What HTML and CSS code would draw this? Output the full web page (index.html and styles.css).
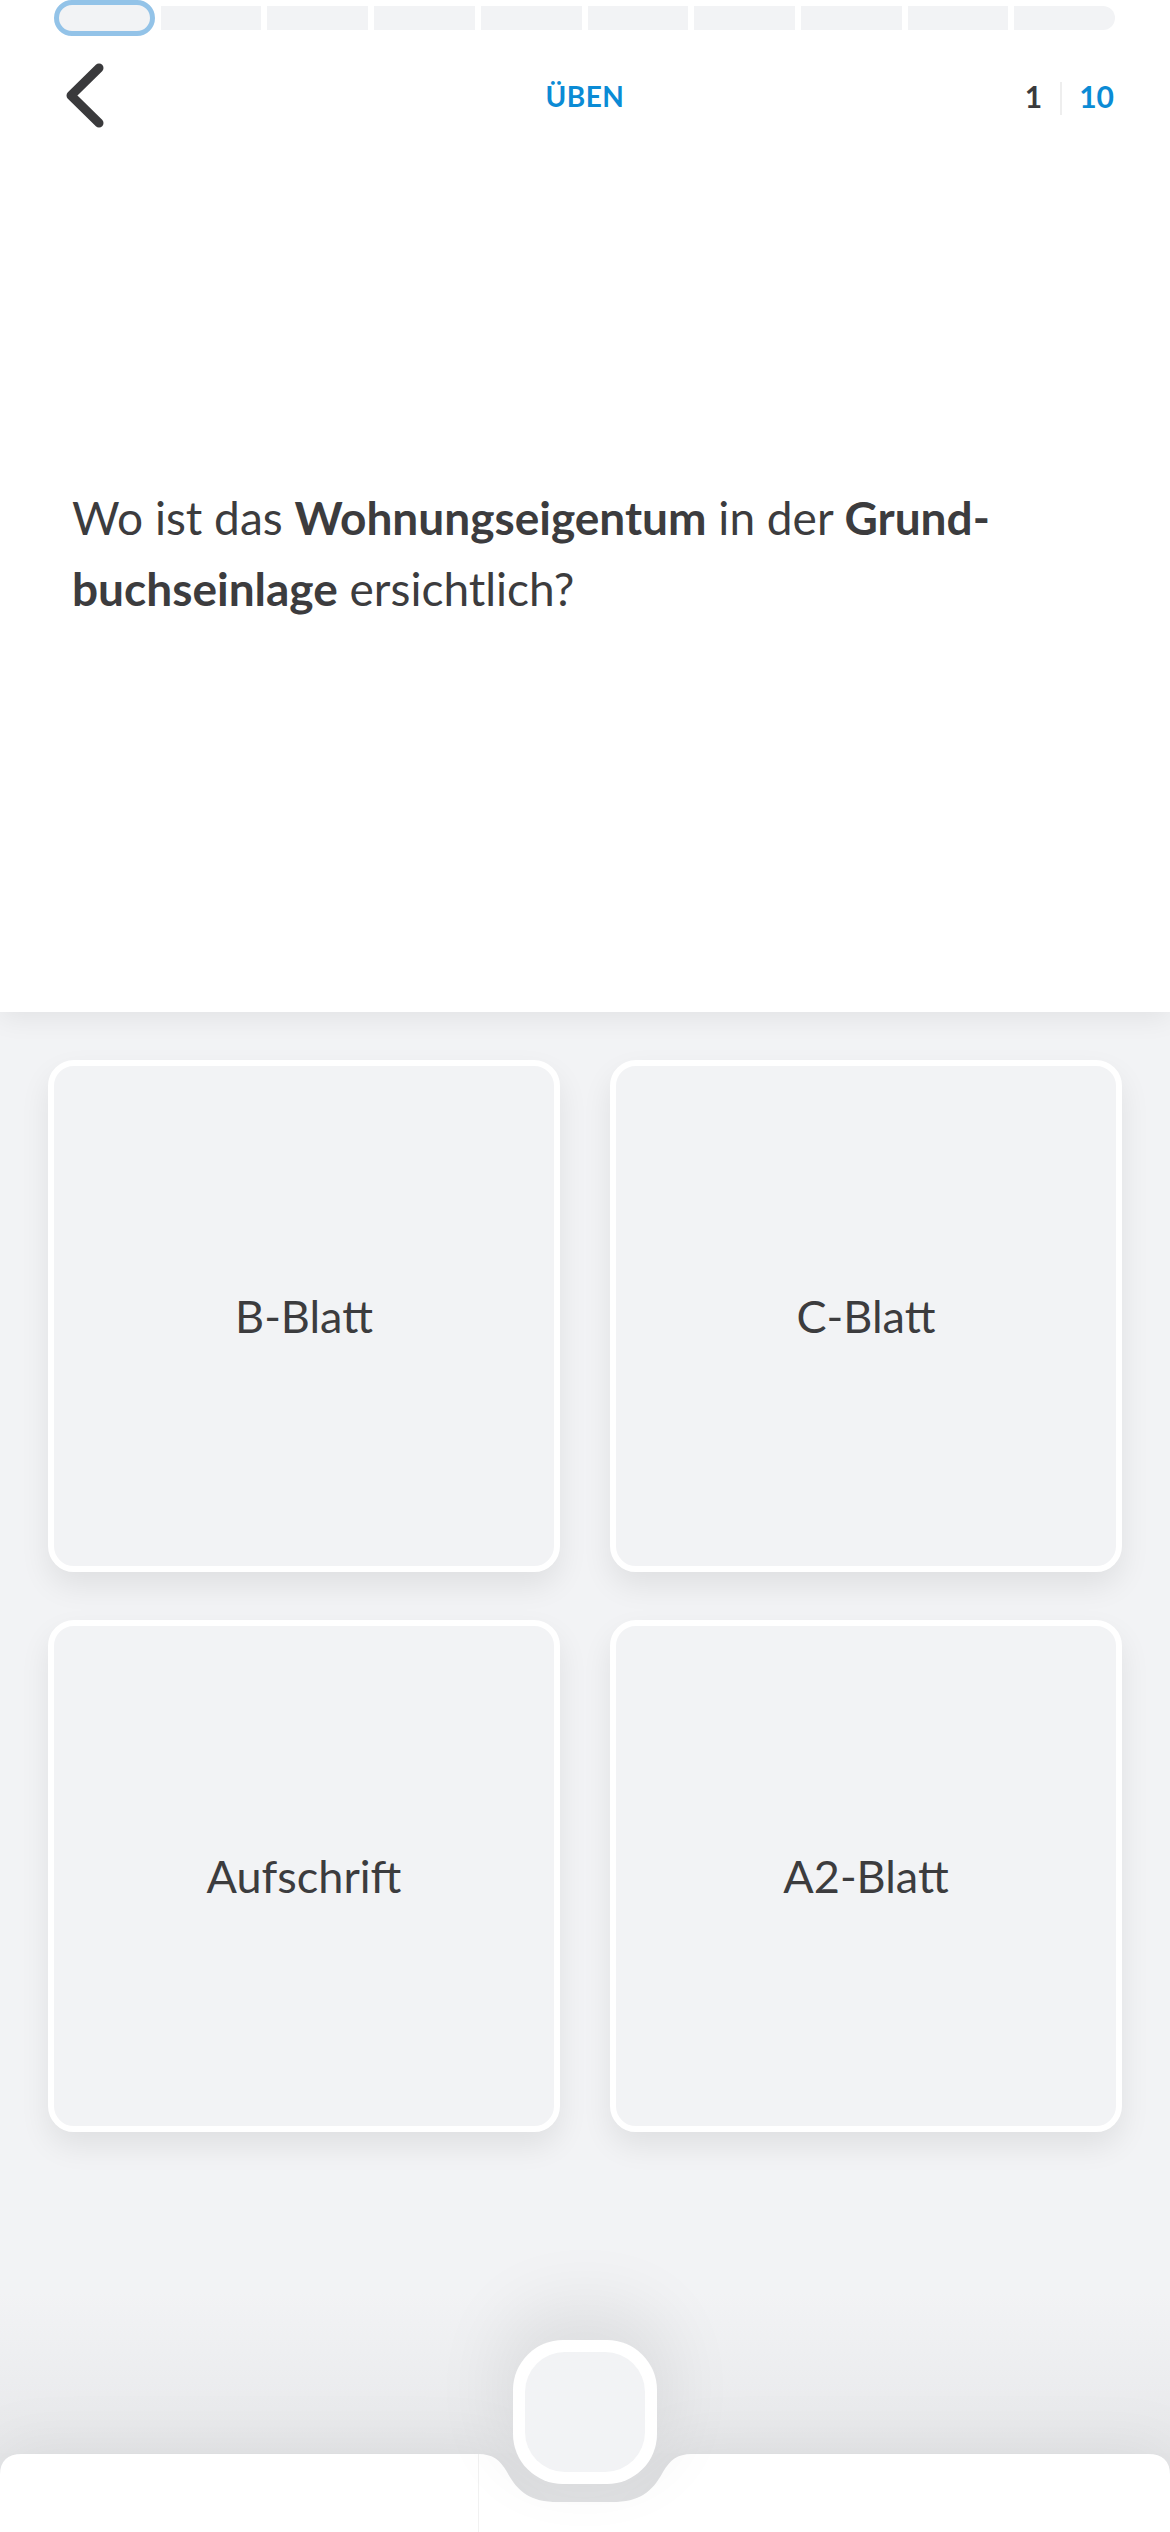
FILE: index.html
```html
<!DOCTYPE html>
<html lang="de">
<head>
<meta charset="utf-8">
<title>Üben</title>
<link rel="stylesheet" href="styles.css">
</head>
<body>
<div class="screen">
  <section class="top">
    <div class="progress">
      <span class="seg seg-active"></span>
      <span class="seg"></span>
      <span class="seg"></span>
      <span class="seg"></span>
      <span class="seg"></span>
      <span class="seg"></span>
      <span class="seg"></span>
      <span class="seg"></span>
      <span class="seg"></span>
      <span class="seg seg-last"></span>
    </div>
    <header class="header">
      <div class="header-left">
        <svg class="back" width="44" height="70" viewBox="0 0 44 70" aria-hidden="true">
          <polyline points="37,7 9,34.5 37,62" fill="none" stroke="#3a3a3c" stroke-width="9" stroke-linecap="round" stroke-linejoin="round"/>
        </svg>
      </div>
      <div class="title">ÜBEN</div>
      <div class="header-right">
        <span class="count-cur">1</span>
        <span class="count-sep"></span>
        <span class="count-total">10</span>
      </div>
    </header>
    <p class="question">Wo ist das <b>Wohnungseigentum</b> in der <b>Grund-<br>buchseinlage</b> ersichtlich?</p>
  </section>

  <main class="answers">
    <div class="grid">
      <div class="card"><span>B-Blatt</span></div>
      <div class="card"><span>C-Blatt</span></div>
      <div class="card"><span>Aufschrift</span></div>
      <div class="card"><span>A2-Blatt</span></div>
    </div>
  </main>

  <nav class="tabbar">
    <svg class="tabbar-shape" width="1170" height="79" viewBox="0 0 1170 79" aria-hidden="true">
      <path d="M0,79 L0,22 Q0,1 22,1 L478,1 C493,1 500,7 507,19 C518,39 530,49 558,49 L612,49 C640,49 652,39 663,19 C670,7 677,1 692,1 L1148,1 Q1170,1 1170,22 L1170,79 Z" fill="#ffffff"/>
    </svg>
    <span class="tab-divider"></span>
    <div class="center-btn"><div class="center-btn-inner"></div></div>
  </nav>
</div>
</body>
</html>
```
FILE: styles.css
```css
* { box-sizing: border-box; }

html, body {
  margin: 0;
  padding: 0;
}

body {
  width: 1170px;
  height: 2532px;
  overflow: hidden;
  background: #ffffff;
  font-family: "Lato", "Open Sans", sans-serif;
  color: #3c3c3e;
}

.screen {
  width: 1170px;
  height: 2532px;
  display: flex;
  flex-direction: column;
  background: #f2f3f5;
}

/* ---------- top panel ---------- */
.top {
  flex: none;
  height: 1012px;
  background: #ffffff;
  position: relative;
  z-index: 2;
  box-shadow: 0 6px 26px rgba(0, 0, 0, 0.07);
}

.progress {
  display: flex;
  align-items: center;
  gap: 6px;
  height: 36px;
  padding: 0 55px 0 54px;
}

.seg {
  flex: 1 1 100px;
  height: 24px;
  background: #f2f3f5;
}

.seg-active {
  height: 36px;
  border: 5px solid #93c3e8;
  border-radius: 18px;
  background: #f2f3f5;
}

.seg-last {
  border-radius: 0 12px 12px 0;
}

.header {
  display: grid;
  grid-template-columns: 1fr auto 1fr;
  align-items: center;
  height: 120px;
}

.header-left {
  display: flex;
  align-items: center;
  padding-left: 62px;
}

.back { display: block; }

.title {
  font-size: 28px;
  font-weight: 700;
  color: #0b8bd5;
  letter-spacing: 0.5px;
}

.header-right {
  display: flex;
  align-items: center;
  justify-content: flex-end;
  padding-right: 56px;
  font-size: 30px;
  font-weight: 700;
}

.count-cur { color: #3a3a3c; }

.count-sep {
  width: 2px;
  height: 33px;
  background: #eeeeee;
  margin: 4px 17px 0 18px;
}

.count-total { color: #0b8bd5; }

.question {
  margin: 0;
  padding: 326px 72px 0 72px;
  font-size: 46px;
  line-height: 71px;
  font-weight: 400;
  color: #3c3c3e;
}

.question b { font-weight: 700; }

/* ---------- answers ---------- */
.answers {
  flex: 1;
  background: linear-gradient(to bottom, #f2f3f5 0, #f2f3f5 calc(100% - 160px), #e7e8ea 100%);
  padding: 48px 48px 0 48px;
}

.grid {
  display: grid;
  grid-template-columns: 512px 512px;
  grid-auto-rows: 512px;
  column-gap: 50px;
  row-gap: 48px;
}

.card {
  display: flex;
  align-items: center;
  justify-content: center;
  background: #f2f3f5;
  border: 6px solid #ffffff;
  border-radius: 26px;
  box-shadow: 0 14px 30px rgba(0, 0, 0, 0.08);
  font-size: 45px;
  color: #3c3c3e;
}

/* ---------- tab bar ---------- */
.tabbar {
  flex: none;
  position: relative;
  height: 79px;
  background: #e6e7e9;
}

.tabbar-shape {
  display: block;
  filter: drop-shadow(0 -6px 30px rgba(0, 0, 0, 0.06));
}

.tab-divider {
  position: absolute;
  left: 478px;
  top: 1px;
  bottom: 0;
  width: 1px;
  background: #f1f1f1;
}

.center-btn {
  position: absolute;
  left: 513px;
  top: -113px;
  width: 144px;
  height: 144px;
  padding: 12px;
  border-radius: 50px;
  background: #ffffff;
  box-shadow: 0 -24px 70px 14px rgba(0, 0, 0, 0.07);
}

.center-btn-inner {
  width: 120px;
  height: 120px;
  border-radius: 40px;
  background: #f2f3f5;
}
```
